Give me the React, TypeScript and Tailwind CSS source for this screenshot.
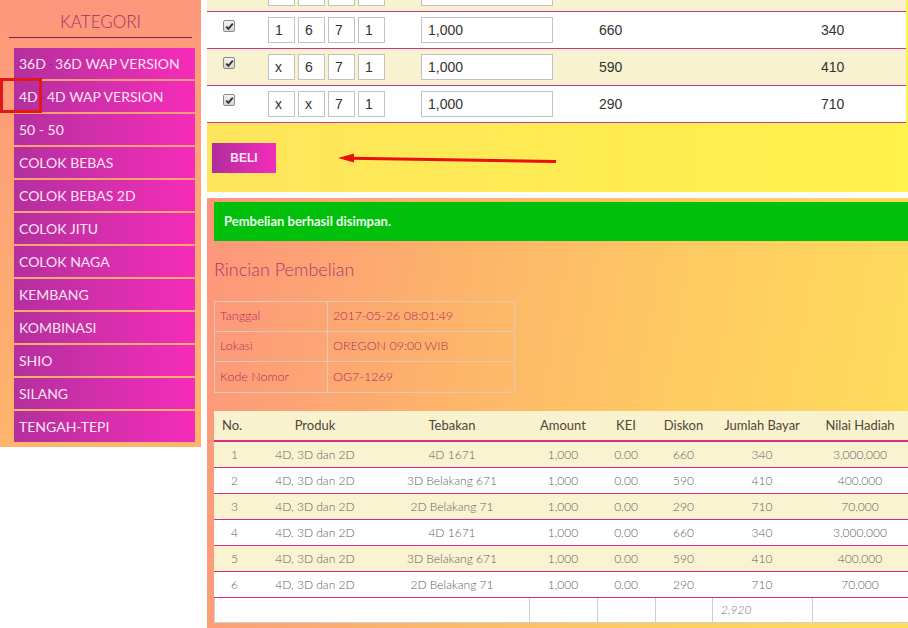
import React from 'react';

const categories = [
  ['36D', '36D WAP VERSION'],
  ['4D', '4D WAP VERSION'],
  ['50 - 50'],
  ['COLOK BEBAS'],
  ['COLOK BEBAS 2D'],
  ['COLOK JITU'],
  ['COLOK NAGA'],
  ['KEMBANG'],
  ['KOMBINASI'],
  ['SHIO'],
  ['SILANG'],
  ['TENGAH-TEPI'],
];

const betRows = [
  { digits: ['', '', '', ''], amount: '', diskon: '', bayar: '', cream: true, checked: false },
  { digits: ['1', '6', '7', '1'], amount: '1,000', diskon: '660', bayar: '340', cream: false, checked: true },
  { digits: ['x', '6', '7', '1'], amount: '1,000', diskon: '590', bayar: '410', cream: true, checked: true },
  { digits: ['x', 'x', '7', '1'], amount: '1,000', diskon: '290', bayar: '710', cream: false, checked: true },
];

const detailRows = [
  ['1', '4D, 3D dan 2D', '4D 1671', '1,000', '0.00', '660', '340', '3,000,000'],
  ['2', '4D, 3D dan 2D', '3D Belakang 671', '1,000', '0.00', '590', '410', '400,000'],
  ['3', '4D, 3D dan 2D', '2D Belakang 71', '1,000', '0.00', '290', '710', '70,000'],
  ['4', '4D, 3D dan 2D', '4D 1671', '1,000', '0.00', '660', '340', '3,000,000'],
  ['5', '4D, 3D dan 2D', '3D Belakang 671', '1,000', '0.00', '590', '410', '400,000'],
  ['6', '4D, 3D dan 2D', '2D Belakang 71', '1,000', '0.00', '290', '710', '70,000'],
];

function CheckBox() {
  return (
    <span className="mt-[8px] flex h-[12px] w-[12px] items-center justify-center self-start rounded-[2px] border border-[#8a8a8a] bg-gradient-to-b from-[#f4f4f4] to-[#d4d4d4]">
      <svg width="9" height="9" viewBox="0 0 9 9">
        <path d="M1.2 4.6 L3.4 6.9 L7.8 1.6" fill="none" stroke="#333" strokeWidth="1.8" />
      </svg>
    </span>
  );
}

function Sidebar() {
  return (
    <div className="w-[201px] self-start bg-gradient-to-b from-[#fc977c] to-[#fdb56b] pb-[5px] font-[Lato,sans-serif]">
      <div className="mx-[9px] flex h-[38px] items-center justify-center border-b border-[#7a1f4a] pt-[6px] text-[17px] font-light text-[#a0306c]">
        KATEGORI
      </div>
      <div className="mt-[10px] ml-[14px] mr-[6px] flex flex-col gap-[2px]">
        {categories.map((c) => (
          <div
            key={c.join('-')}
            className="flex h-[31px] items-center bg-gradient-to-r from-[#b42f9e] to-[#f62bb9] pl-[5px] text-[14px] text-[#fde4f4]"
          >
            {c.length === 2 ? (
              <>
                <span>{c[0]}</span>
                <span className="mx-[2px] text-[#9a2a7a]">-</span>
                <span>{c[1]}</span>
              </>
            ) : (
              <span>{c[0]}</span>
            )}
          </div>
        ))}
      </div>
    </div>
  );
}

function BetPanel() {
  return (
    <div className="relative h-[192px] bg-gradient-to-r from-[#fde55c] to-[#fff24a] pr-[2px] font-['Liberation_Sans',Arial,sans-serif] text-[14px] text-[#333]">
      <div className="overflow-hidden">
        <div className="-mt-[25px]">
          {betRows.map((r, i) => (
            <div
              key={i}
              className={`flex h-[37px] items-center border-b border-[#c8378a] ${r.cream ? 'bg-[#f9f2d0]' : 'bg-white'}`}
            >
              <div className="flex w-[61px] self-stretch pl-[16px]">{r.checked && <CheckBox />}</div>
              <div className="flex w-[153px] gap-[3px]">
                {r.digits.map((d, j) => (
                  <div key={j} className="flex h-[26px] w-[27px] items-center border border-[#c2c2c2] bg-white pl-[6px]">
                    {d}
                  </div>
                ))}
              </div>
              <div className="w-[178px]">
                <div className="flex h-[26px] w-[132px] items-center border border-[#c2c2c2] bg-white pl-[6px]">
                  {r.amount}
                </div>
              </div>
              <div className="w-[222px]">{r.diskon}</div>
              <div>{r.bayar}</div>
            </div>
          ))}
        </div>
      </div>
      <div className="pl-[5px] pt-[20px]">
        <button className="flex h-[30px] w-[64px] items-center justify-center bg-gradient-to-r from-[#b22c9c] to-[#f42cbc] text-[12px] font-bold text-[#fde3f5]">
          BELI
        </button>
      </div>
      <svg className="absolute left-[129px] top-[150px]" width="224" height="16" viewBox="0 0 224 16">
        <line x1="15" y1="8.3" x2="220" y2="11.4" stroke="#e81010" strokeWidth="3" />
        <polygon points="2,8 18,3.5 18,12.5" fill="#e81010" />
      </svg>
    </div>
  );
}

const cols = 'grid grid-cols-[41px_120px_154px_68px_58px_57px_100px_96px]';

function ResultPanel() {
  return (
    <div className="flex-1 bg-[linear-gradient(100deg,#fc967c_0%,#fdb46a_35%,#fecb62_65%,#ffde5a_100%)] pl-[7px] pt-[4px] font-[Lato,sans-serif]">
      <div className="flex h-[39px] items-center bg-[#00c00c] pl-[10px] text-[13px] font-bold text-[#ecfbe8]">
        Pembelian berhasil disimpan.
      </div>
      <h2 className="mt-[16px] h-[24px] text-[18px] font-light leading-[24px] text-[#b0386a]">Rincian Pembelian</h2>

      <div className="mt-[20px] w-[301px] border border-[#dccbb9] text-[12.5px] font-light text-[#b32a5c]">
        {[
          ['Tanggal', '2017-05-26 08:01:49'],
          ['Lokasi', 'OREGON 09:00 WIB'],
          ['Kode Nomor', 'OG7-1269'],
        ].map(([k, v], i) => (
          <div key={k} className={`grid h-[30px] grid-cols-[113px_1fr] ${i < 2 ? 'border-b border-[#dccbb9]' : ''}`}>
            <div className="flex items-center border-r border-[#dccbb9] pl-[5px]">{k}</div>
            <div className="flex items-center pl-[5px]">{v}</div>
          </div>
        ))}
      </div>

      <div className="mt-[18px] w-[694px] text-[13px]">
        <div className={`${cols} h-[31px] items-center border-b-2 border-[#dd2a88] bg-[#f8f2cf] text-[#514536]`}>
          <div className="pl-[8px]">No.</div>
          <div className="text-center">Produk</div>
          <div className="text-center">Tebakan</div>
          <div className="text-center">Amount</div>
          <div className="text-center">KEI</div>
          <div className="text-center">Diskon</div>
          <div className="text-center">Jumlah Bayar</div>
          <div className="text-center">Nilai Hadiah</div>
        </div>
        {detailRows.map((r, i) => (
          <div
            key={i}
            className={`${cols} h-[26px] items-center border-b border-[#d82a86] text-[12px] font-light text-[#626262] ${i % 2 === 0 ? 'bg-[#f9f3d1]' : 'bg-white'}`}
          >
            {r.map((c, j) => (
              <div key={j} className="text-center">
                {c}
              </div>
            ))}
          </div>
        ))}
        <div className={`${cols} h-[25px] border-b border-l border-[#cfcfcf] bg-white text-[12px] font-light text-[#707070]`}>
          <div className="col-span-3 border-r border-[#cfcfcf]" />
          <div className="border-r border-[#cfcfcf]" />
          <div className="border-r border-[#cfcfcf]" />
          <div className="border-r border-[#cfcfcf]" />
          <div className="flex items-center border-r border-[#cfcfcf] pl-[8px] italic">2,920</div>
          <div />
        </div>
      </div>
    </div>
  );
}

export default function App() {
  return (
    <div className="relative flex h-[628px] w-[908px] gap-[6px] overflow-hidden bg-white">
      <Sidebar />
      <div className="flex w-[701px] flex-col gap-[6px]">
        <BetPanel />
        <ResultPanel />
      </div>
      <div className="absolute left-0 top-[78px] h-[35px] w-[42px] border-[3px] border-[#e01818]" />
    </div>
  );
}
